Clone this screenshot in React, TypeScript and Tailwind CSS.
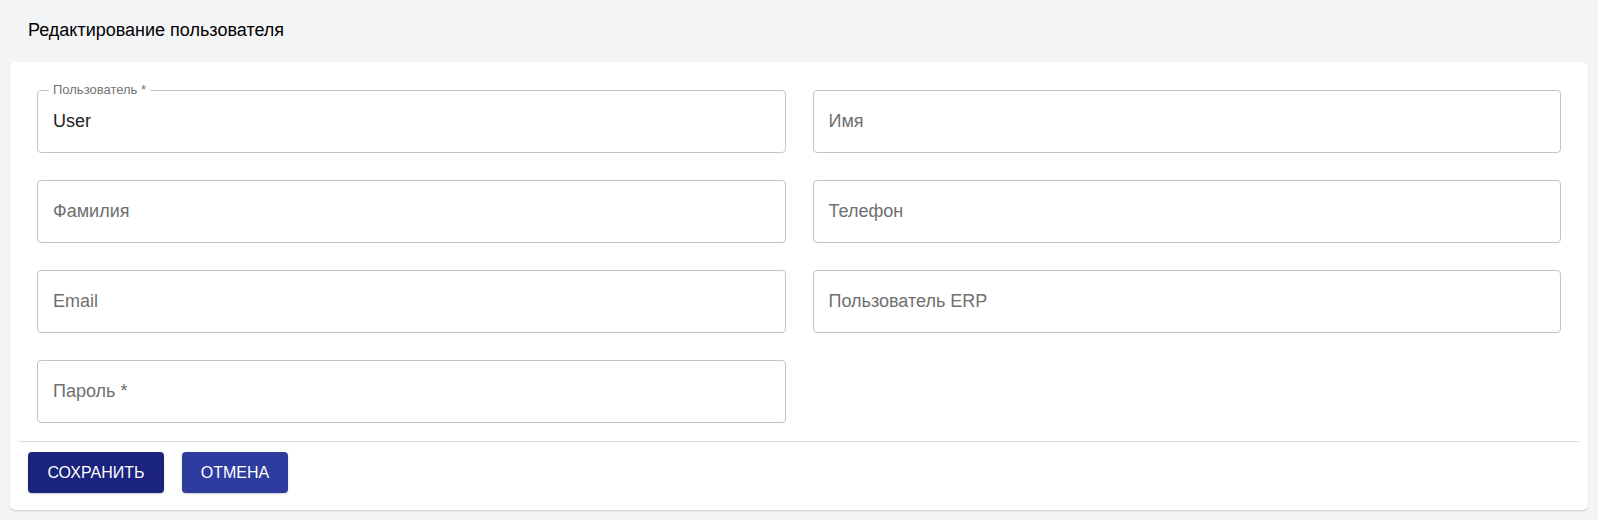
import { useState } from 'react';

type Field = {
  key: string;
  label: string;
  required?: boolean;
};

const fields: Field[] = [
  { key: 'username', label: 'Пользователь', required: true },
  { key: 'firstName', label: 'Имя' },
  { key: 'lastName', label: 'Фамилия' },
  { key: 'phone', label: 'Телефон' },
  { key: 'email', label: 'Email' },
  { key: 'erpUser', label: 'Пользователь ERP' },
  { key: 'password', label: 'Пароль', required: true },
];

function OutlinedField({ field, value }: { field: Field; value: string }) {
  const label = field.required ? `${field.label} *` : field.label;
  const filled = value.length > 0;

  return (
    <div className="relative h-[63px]">
      <fieldset className="absolute inset-0 m-0 rounded-[4px] border border-[#c4c4c4] px-[11px] pointer-events-none">
        {filled && (
          <legend className="px-[4px] text-[13px] leading-[1px] text-transparent">{label}</legend>
        )}
      </fieldset>
      {filled ? (
        <>
          <span className="absolute left-[16px] top-[-8px] text-[13px] leading-[15px] text-[#757575]">
            {label}
          </span>
          <div className="flex h-full items-center px-[16px] text-[18px] text-[#212121]">{value}</div>
        </>
      ) : (
        <div className="flex h-full items-center px-[16px] text-[18px] text-[#6f6f6f]">{label}</div>
      )}
    </div>
  );
}

export default function App() {
  const [values] = useState<Record<string, string>>({ username: 'User' });

  return (
    <div className="min-h-[520px] bg-[#f4f5f7] px-[10px] pb-[11px] font-['Liberation_Sans',Arial,sans-serif]">
      <div className="flex h-[62px] items-center pl-[18px] pb-[2px] text-[18px] text-black">
        Редактирование пользователя
      </div>
      <div className="rounded-[5px] bg-white shadow-[0_1px_2px_rgba(0,0,0,0.18)]">
        <div className="grid grid-cols-2 gap-x-[27px] gap-y-[27px] px-[27px] pt-[28px] pb-[18px]">
          {fields.map((f) => (
            <OutlinedField key={f.key} field={f} value={values[f.key] ?? ''} />
          ))}
        </div>
        <div className="mx-[9px] border-t border-[#dedede]" />
        <div className="flex gap-[18px] px-[18px] pt-[10px] pb-[17px]">
          <button className="h-[41px] w-[136px] rounded-[4px] bg-[#1a237e] text-[16px] uppercase text-white shadow-[0_1px_2px_rgba(0,0,0,0.2)]">
            Сохранить
          </button>
          <button className="h-[41px] w-[106px] rounded-[4px] bg-[#2e3b9f] text-[16px] uppercase text-white shadow-[0_1px_2px_rgba(0,0,0,0.2)]">
            Отмена
          </button>
        </div>
      </div>
    </div>
  );
}
